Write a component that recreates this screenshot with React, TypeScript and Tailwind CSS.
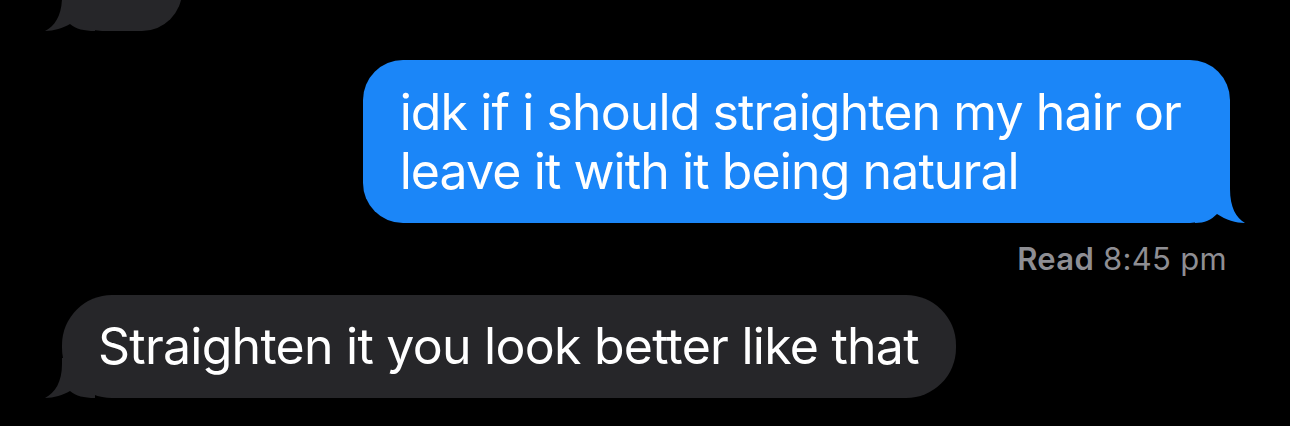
import React from 'react';

const FONT = { fontFamily: 'Inter, "Noto Sans", sans-serif' };

// iMessage style tail, drawn under the bubble's bottom corner
const Tail: React.FC<{ side: 'left' | 'right'; color: string }> = ({ side, color }) =>
  side === 'left' ? (
    <svg width="50" height="40" viewBox="0 0 50 40" className="absolute bottom-0 left-[-17px]">
      <path d="M17 0 L17 6 C17 24 10 35 0 40 C9 40 18 37 25 33 C31 38 39 40 50 40 L50 0 Z" fill={color} />
    </svg>
  ) : (
    <svg width="50" height="40" viewBox="0 0 50 40" className="absolute bottom-0 right-[-15px]">
      <path d="M35 0 L35 6 C35 24 41 35 50 40 C41 40 31 37 22 31 C16 37 10 40 0 40 L0 0 Z" fill={color} />
    </svg>
  );

export default function App() {
  return (
    <div className="w-[1290px] h-[426px] bg-black overflow-hidden flex flex-col" style={FONT}>
      {/* previous incoming bubble, cut off by the top edge */}
      <div className="relative ml-[62px] mt-[-69px] w-[120px] h-[100px] rounded-[40px] bg-[#262629]">
        <Tail side="left" color="#262629" />
      </div>

      {/* outgoing */}
      <div className="relative self-end mr-[60px] mt-[29px] rounded-[40px] bg-[#1b86f8] pl-[37px] pr-[49px] pt-[23px] pb-[22px]">
        <p className="text-white text-[50px] leading-[59px] tracking-[-0.9px] whitespace-nowrap">
          idk if i should straighten my hair or
          <br />
          leave it with it being natural
        </p>
        <Tail side="right" color="#1b86f8" />
      </div>

      <div className="self-end mr-[63px] mt-[18px] text-[31px] leading-[36px] tracking-[0.3px] text-[#8e8e93]">
        <span className="font-semibold">Read</span> 8:45 pm
      </div>

      {/* incoming */}
      <div className="relative self-start ml-[62px] mt-[18px] rounded-[50px] bg-[#262629] pl-[36px] pr-[37px] pt-[22px] pb-[22px]">
        <p className="text-white text-[50px] leading-[59px] tracking-[-0.75px] whitespace-nowrap">
          Straighten it you look better like that
        </p>
        <Tail side="left" color="#262629" />
      </div>
    </div>
  );
}
